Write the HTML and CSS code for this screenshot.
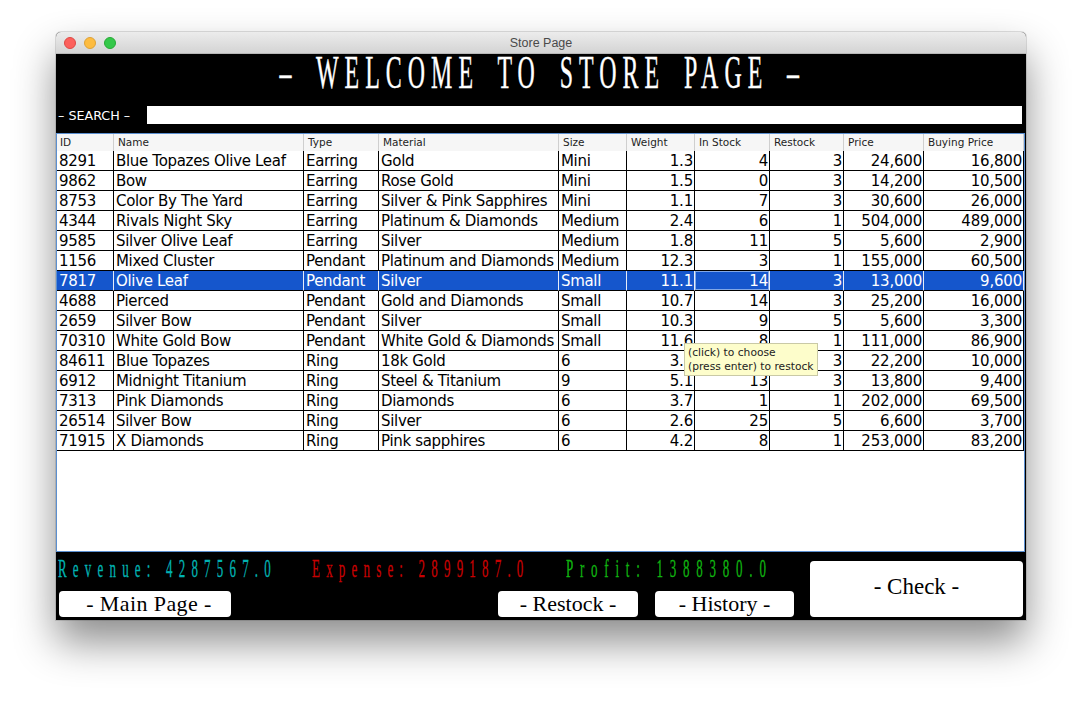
FILE: index.html
```html
<!DOCTYPE html>
<html>
<head>
<meta charset="utf-8">
<title>Store Page</title>
<link rel="stylesheet" href="styles.css">
</head>
<body>
<div class="window">
  <div class="titlebar">
    <div class="lights">
      <span class="light red"></span>
      <span class="light yellow"></span>
      <span class="light green"></span>
    </div>
    <div class="wtitle">Store Page</div>
  </div>
  <div class="content">
    <div class="heading"><span class="heading-text">– WELCOME TO STORE PAGE –</span></div>
    <div class="search">
      <div class="search-label">– SEARCH –</div>
      <div class="search-input"></div>
    </div>
    <div class="pane">
      <div class="thead">
        <div class="th">ID</div><div class="th">Name</div><div class="th">Type</div><div class="th">Material</div><div class="th">Size</div><div class="th">Weight</div><div class="th">In Stock</div><div class="th">Restock</div><div class="th">Price</div><div class="th">Buying Price</div>
      </div>
      <div class="tbody">
        <div class="tr"><div class="td">8291</div><div class="td">Blue Topazes Olive Leaf</div><div class="td">Earring</div><div class="td">Gold</div><div class="td">Mini</div><div class="td num">1.3</div><div class="td num">4</div><div class="td num">3</div><div class="td num">24,600</div><div class="td num">16,800</div></div>
        <div class="tr"><div class="td">9862</div><div class="td">Bow</div><div class="td">Earring</div><div class="td">Rose Gold</div><div class="td">Mini</div><div class="td num">1.5</div><div class="td num">0</div><div class="td num">3</div><div class="td num">14,200</div><div class="td num">10,500</div></div>
        <div class="tr"><div class="td">8753</div><div class="td">Color By The Yard</div><div class="td">Earring</div><div class="td">Silver &amp; Pink Sapphires</div><div class="td">Mini</div><div class="td num">1.1</div><div class="td num">7</div><div class="td num">3</div><div class="td num">30,600</div><div class="td num">26,000</div></div>
        <div class="tr"><div class="td">4344</div><div class="td">Rivals Night Sky</div><div class="td">Earring</div><div class="td">Platinum &amp; Diamonds</div><div class="td">Medium</div><div class="td num">2.4</div><div class="td num">6</div><div class="td num">1</div><div class="td num">504,000</div><div class="td num">489,000</div></div>
        <div class="tr"><div class="td">9585</div><div class="td">Silver Olive Leaf</div><div class="td">Earring</div><div class="td">Silver</div><div class="td">Medium</div><div class="td num">1.8</div><div class="td num">11</div><div class="td num">5</div><div class="td num">5,600</div><div class="td num">2,900</div></div>
        <div class="tr"><div class="td">1156</div><div class="td">Mixed Cluster</div><div class="td">Pendant</div><div class="td">Platinum and Diamonds</div><div class="td">Medium</div><div class="td num">12.3</div><div class="td num">3</div><div class="td num">1</div><div class="td num">155,000</div><div class="td num">60,500</div></div>
        <div class="tr selected"><div class="td">7817</div><div class="td">Olive Leaf</div><div class="td">Pendant</div><div class="td">Silver</div><div class="td">Small</div><div class="td num">11.1</div><div class="td num focus">14</div><div class="td num">3</div><div class="td num">13,000</div><div class="td num">9,600</div></div>
        <div class="tr"><div class="td">4688</div><div class="td">Pierced</div><div class="td">Pendant</div><div class="td">Gold and Diamonds</div><div class="td">Small</div><div class="td num">10.7</div><div class="td num">14</div><div class="td num">3</div><div class="td num">25,200</div><div class="td num">16,000</div></div>
        <div class="tr"><div class="td">2659</div><div class="td">Silver Bow</div><div class="td">Pendant</div><div class="td">Silver</div><div class="td">Small</div><div class="td num">10.3</div><div class="td num">9</div><div class="td num">5</div><div class="td num">5,600</div><div class="td num">3,300</div></div>
        <div class="tr"><div class="td">70310</div><div class="td">White Gold Bow</div><div class="td">Pendant</div><div class="td">White Gold &amp; Diamonds</div><div class="td">Small</div><div class="td num">11.6</div><div class="td num">8</div><div class="td num">1</div><div class="td num">111,000</div><div class="td num">86,900</div></div>
        <div class="tr"><div class="td">84611</div><div class="td">Blue Topazes</div><div class="td">Ring</div><div class="td">18k Gold</div><div class="td">6</div><div class="td num">3.2</div><div class="td num">10</div><div class="td num">3</div><div class="td num">22,200</div><div class="td num">10,000</div></div>
        <div class="tr"><div class="td">6912</div><div class="td">Midnight Titanium</div><div class="td">Ring</div><div class="td">Steel &amp; Titanium</div><div class="td">9</div><div class="td num">5.1</div><div class="td num">13</div><div class="td num">3</div><div class="td num">13,800</div><div class="td num">9,400</div></div>
        <div class="tr"><div class="td">7313</div><div class="td">Pink Diamonds</div><div class="td">Ring</div><div class="td">Diamonds</div><div class="td">6</div><div class="td num">3.7</div><div class="td num">1</div><div class="td num">1</div><div class="td num">202,000</div><div class="td num">69,500</div></div>
        <div class="tr"><div class="td">26514</div><div class="td">Silver Bow</div><div class="td">Ring</div><div class="td">Silver</div><div class="td">6</div><div class="td num">2.6</div><div class="td num">25</div><div class="td num">5</div><div class="td num">6,600</div><div class="td num">3,700</div></div>
        <div class="tr"><div class="td">71915</div><div class="td">X Diamonds</div><div class="td">Ring</div><div class="td">Pink sapphires</div><div class="td">6</div><div class="td num">4.2</div><div class="td num">8</div><div class="td num">1</div><div class="td num">253,000</div><div class="td num">83,200</div></div>
      </div>
      <div class="tooltip">(click) to choose<br>(press enter) to restock</div>
    </div>
    <div class="bottom">
      <div class="bottom-left">
        <div class="stats">
          <div class="stat"><span class="stat-text revenue">Revenue: 4287567.0</span></div>
          <div class="stat"><span class="stat-text expense">Expense: 2899187.0</span></div>
          <div class="stat stat-last"><span class="stat-text profit">Profit: 1388380.0</span></div>
        </div>
        <div class="buttons">
          <div class="btn btn-main">- Main Page -</div>
          <div class="btn btn-restock">- Restock -</div>
          <div class="btn btn-history">- History -</div>
        </div>
      </div>
      <div class="btn btn-check">- Check -</div>
    </div>
  </div>
</div>
</body>
</html>
```

FILE: styles.css
```css
html, body {
  margin: 0;
  padding: 0;
  background: #ffffff;
}
body {
  padding: 32px 0 0 56px;
  width: 1082px;
  height: 701px;
  box-sizing: border-box;
  overflow: hidden;
}
.window {
  width: 970px;
  height: 588px;
  border-radius: 5px 5px 0 0;
  box-shadow: 0 22px 42px rgba(0,0,0,0.45), 0 0 0 1px rgba(0,0,0,0.12);
  display: flex;
  flex-direction: column;
  background: #000;
}
.titlebar {
  height: 22px;
  flex: none;
  box-sizing: border-box;
  border-radius: 5px 5px 0 0;
  background: linear-gradient(#ececec, #d4d4d4);
  border-bottom: 1px solid #b8b8b8;
  display: flex;
  align-items: center;
  position: relative;
}
.lights {
  display: flex;
  gap: 8px;
  margin-left: 8px;
}
.light {
  width: 12px;
  height: 12px;
  border-radius: 50%;
  box-sizing: border-box;
}
.red { background: #fc605c; border: 1px solid #de4944; }
.yellow { background: #fdbc40; border: 1px solid #dea236; }
.green { background: #34c84a; border: 1px solid #27aa35; }
.wtitle {
  position: absolute;
  left: 0;
  right: 0;
  top: 0;
  line-height: 23px;
  text-align: center;
  font-family: "Liberation Sans", Arial, sans-serif;
  font-size: 12.5px;
  color: #4a4a4a;
}
.content {
  flex: 1;
  display: flex;
  flex-direction: column;
  background: #000;
}
.heading {
  height: 46px;
  display: flex;
  justify-content: center;
  overflow: visible;
}
.heading-text {
  flex: none;
  display: block;
  font-family: "Liberation Serif", "Times New Roman", serif;
  font-size: 46px;
  line-height: 38px;
  height: 46px;
  color: #fff;
  letter-spacing: 11.6px;
  word-spacing: 13px;
  padding-left: 4px;
  transform: scaleX(0.52);
  transform-origin: center;
  white-space: nowrap;
  -webkit-text-stroke: 0.4px #fff;
}
.search {
  display: flex;
  align-items: center;
  padding-top: 6px;
  height: 18px;
}
.search-label {
  width: 91px;
  padding-left: 2px;
  box-sizing: border-box;
  color: #fff;
  font-family: "DejaVu Sans", sans-serif;
  font-size: 12.7px;
  white-space: nowrap;
}
.search-input {
  flex: 1;
  height: 18px;
  background: #fff;
  margin-right: 4px;
}
.pane {
  margin-top: 9px;
  width: 969px;
  height: 419px;
  box-sizing: border-box;
  border: 1px solid #5b8fd0;
  background: #fff;
  position: relative;
}
.thead, .tr {
  display: grid;
  grid-template-columns: 57px 190px 75px 180px 68px 68px 75px 74px 80px 100px;
}
.thead {
  height: 17px;
  background: #f6f6f6;
}
.th {
  box-sizing: border-box;
  border-right: 1px solid #cfcfcf;
  padding-left: 4px;
  font-family: "DejaVu Sans", sans-serif;
  font-size: 10.5px;
  line-height: 16px;
  color: #1e1e1e;
  white-space: nowrap;
  overflow: hidden;
}
.th:first-child { padding-left: 3px; }
.tr {
  height: 20px;
}
.td {
  box-sizing: border-box;
  border-right: 1px solid #000;
  border-bottom: 1px solid #000;
  padding-left: 2px;
  padding-top: 1px;
  font-family: "DejaVu Sans", sans-serif;
  font-size: 15px;
  letter-spacing: -0.32px;
  line-height: 18px;
  color: #000;
  white-space: nowrap;
  overflow: hidden;
}
.td.num {
  text-align: right;
  padding-left: 0;
  padding-right: 1px;
  letter-spacing: -0.2px;
}
.tr.selected .td {
  background: #1556cc;
  color: #fff;
  border-right-color: #e6ecf8;
}
.tr.selected .td.focus {
  box-shadow: inset 1px 1px 0 #82a8e6, inset -1px -1px 0 #82a8e6;
}
.tooltip {
  position: absolute;
  left: 627px;
  top: 209px;
  width: 134px;
  height: 33px;
  box-sizing: border-box;
  background: #fdfdcb;
  border: 1px solid #c9c9a6;
  padding: 2px 0 0 3px;
  font-family: "DejaVu Sans", sans-serif;
  font-size: 10.7px;
  line-height: 14px;
  color: #222;
  white-space: nowrap;
}
.bottom {
  flex: 1;
  display: flex;
  padding: 0 3px 3px 2px;
}
.bottom-left {
  flex: 1;
  min-width: 0;
  display: flex;
  flex-direction: column;
}
.stats {
  display: flex;
  margin-top: 2px;
  height: 30px;
}
.stat {
  width: 254px;
  flex: none;
  white-space: nowrap;
}
.stat-last {
  width: auto;
  flex: 1;
  min-width: 0;
}
.stat-text {
  display: inline-block;
  font-family: "Liberation Serif", "Times New Roman", serif;
  font-size: 25px;
  line-height: 30px;
  letter-spacing: 11.9px;
  transform: scaleX(0.52);
  transform-origin: left center;
  -webkit-text-stroke: 0.3px currentColor;
}
.revenue { color: #00b2b2; }
.expense { color: #c80000; }
.profit { color: #10b410; letter-spacing: 13px; }
.buttons {
  margin-top: auto;
  display: flex;
  padding-left: 1px;
}
.btn {
  background: #fff;
  border-radius: 4px;
  color: #000;
  font-family: "Liberation Serif", "Times New Roman", serif;
  font-size: 22px;
  height: 26px;
  line-height: 25px;
  text-align: center;
  white-space: nowrap;
  box-sizing: border-box;
}
.btn-main { width: 172px; flex: none; letter-spacing: 0.4px; padding-left: 8px; }
.btn-restock { width: 140px; flex: none; margin-left: 267px; }
.btn-history { width: 139px; flex: none; margin-left: 17px; }
.btn-check {
  flex: none;
  align-self: flex-end;
  width: 213px;
  height: 56px;
  line-height: 52px;
  font-size: 23px;
}
```
